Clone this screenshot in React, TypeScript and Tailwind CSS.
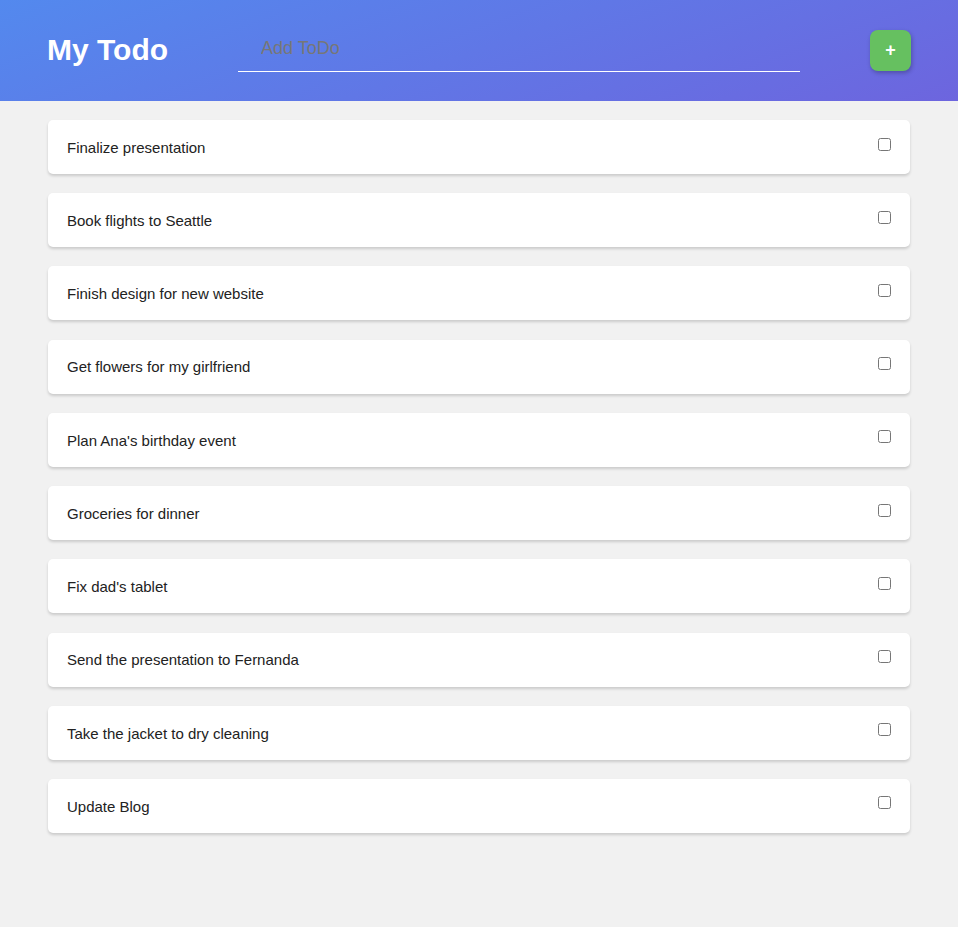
import React from "react";

const todos = [
  "Finalize presentation",
  "Book flights to Seattle",
  "Finish design for new website",
  "Get flowers for my girlfriend",
  "Plan Ana's birthday event",
  "Groceries for dinner",
  "Fix dad's tablet",
  "Send the presentation to Fernanda",
  "Take the jacket to dry cleaning",
  "Update Blog",
];

export default function App() {
  return (
    <div className="min-h-[927px] bg-[#f1f1f1] font-['Liberation_Sans',Arial,sans-serif]">
      <header className="h-[101px] bg-[linear-gradient(160deg,#5389ee_0%,#6d65de_100%)] flex items-center pl-[47px] pr-[47px]">
        <h1 className="text-white font-bold text-[30px] leading-none w-[191px] shrink-0 -mt-[2px]">My Todo</h1>
        <div className="w-[562px] h-[46px] border-b border-white flex items-center pl-[23px] self-start mt-[26px]">
          <input
            className="w-full bg-transparent outline-none text-[18px] text-white placeholder:text-[#777] -mt-[1px]"
            placeholder="Add ToDo"
          />
        </div>
        <div className="flex-1" />
        <button className="w-[41px] h-[41px] rounded-[8px] bg-[#66c060] text-white text-[18px] font-bold shadow-[1px_2px_4px_rgba(0,0,0,0.25)] flex items-center justify-center">
          +
        </button>
      </header>
      <main className="px-[48px] pt-[19px] flex flex-col gap-[19.22px]">
        {todos.map((t) => (
          <div
            key={t}
            className="h-[54px] bg-white rounded-[5px] shadow-[0_2px_3px_rgba(0,0,0,0.16)] flex items-center justify-between pl-[19px] pr-[19px] pt-[2px]"
          >
            <span className="text-[15px] text-[#222]">{t}</span>
            <input type="checkbox" className="w-[13px] h-[13px] -mt-[8px] mr-0" />
          </div>
        ))}
      </main>
    </div>
  );
}
